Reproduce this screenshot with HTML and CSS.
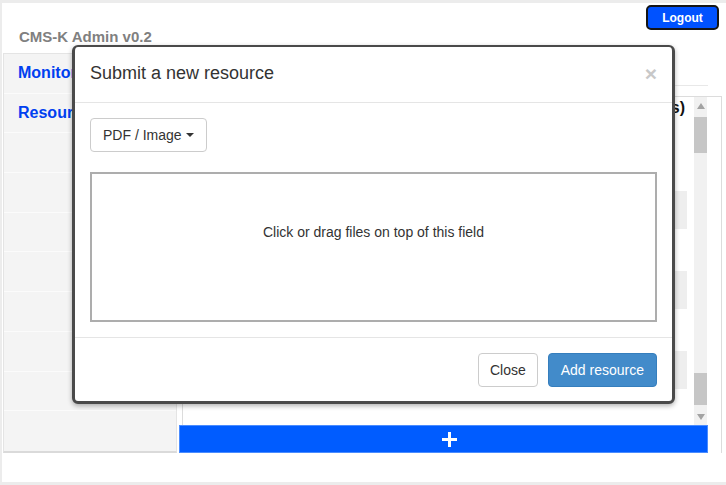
FILE: index.html
```html
<!DOCTYPE html>
<html lang="en">
<head>
<meta charset="utf-8">
<title>CMS-K Admin</title>
<link rel="stylesheet" href="styles.css">
</head>
<body>
<div class="page">
  <header class="top">
    <h1 class="brand">CMS-K Admin v0.2</h1>
    <button class="logout">Logout</button>
  </header>
  <div class="layout">
    <nav class="sidebar">
      <a class="nav-item">Monitor</a>
      <a class="nav-item">Resources</a>
      <span class="nav-item"></span>
      <span class="nav-item"></span>
      <span class="nav-item"></span>
      <span class="nav-item"></span>
      <span class="nav-item"></span>
      <span class="nav-item"></span>
      <span class="nav-item"></span>
      <span class="nav-item nav-last"></span>
    </nav>
    <main class="main">
      <hr class="rule">
      <section class="panel">
        <div class="panel-scroll">
          <div class="list">
            <div class="list-head">Resources (7 items)</div>
            <div class="row"></div>
            <div class="row row-alt"></div>
            <div class="row"></div>
            <div class="row row-alt"></div>
            <div class="row"></div>
            <div class="row row-alt"></div>
            <div class="row"></div>
          </div>
          <div class="scrollbar">
            <div class="sb-arrow"><span class="tri-up"></span></div>
            <div class="sb-thumb sb-thumb-top"></div>
            <div class="sb-space"></div>
            <div class="sb-thumb sb-thumb-bottom"></div>
            <div class="sb-arrow"><span class="tri-down"></span></div>
          </div>
        </div>
        <button class="add-bar" aria-label="Add">
          <svg width="15" height="15" viewBox="0 0 15 15"><rect x="6" y="0" width="3" height="15" fill="#fff"/><rect x="0" y="6" width="15" height="3" fill="#fff"/></svg>
        </button>
      </section>
    </main>
  </div>

  <div class="modal">
    <div class="modal-header">
      <h4 class="modal-title">Submit a new resource</h4>
      <button class="modal-close">&times;</button>
    </div>
    <div class="modal-body">
      <button class="dropdown">PDF / Image <span class="caret"></span></button>
      <div class="dropzone">Click or drag files on top of this field</div>
    </div>
    <div class="modal-footer">
      <button class="btn btn-default">Close</button>
      <button class="btn btn-primary">Add resource</button>
    </div>
  </div>
</div>
</body>
</html>
```
FILE: styles.css
```css
* { box-sizing: border-box; }

html, body {
  margin: 0;
  padding: 0;
}

body {
  background: #ececec;
  font-family: "Liberation Sans", Arial, sans-serif;
  color: #333;
  width: 726px;
  height: 485px;
  overflow: hidden;
}

.page {
  position: relative;
  margin: 3px 0 0 2px;
  width: 724px;
  height: 479px;
  background: #fff;
  overflow: hidden;
}

.top {
  height: 50px;
  display: flex;
  justify-content: space-between;
  align-items: flex-start;
}

.brand {
  margin: 25px 0 0 17px;
  font-size: 15px;
  line-height: 18px;
  font-weight: bold;
  color: #808080;
}

.logout {
  margin: 2px 7px 0 0;
  width: 73px;
  height: 25px;
  border: 2px solid #151515;
  border-radius: 5px;
  background: #0052ff;
  color: #fff;
  font-family: "Liberation Sans", Arial, sans-serif;
  font-size: 12px;
  font-weight: bold;
  padding: 0;
}

.layout {
  display: flex;
  padding-left: 1px;
}

.sidebar {
  width: 174px;
  display: flex;
  flex-direction: column;
  background: #f4f4f4;
  border: 1px solid #e4e4e4;
  border-bottom: 2px solid #dadada;
}

.nav-item {
  height: 39.7px;
  display: flex;
  align-items: center;
  padding-left: 14px;
  border-bottom: 1px solid #fbfbfb;
  color: #0040f0;
  font-weight: bold;
  font-size: 16px;
  text-decoration: none;
}

.nav-last { border-bottom: none; }

.main {
  flex: 1;
  margin-left: 2px;
  display: flex;
  flex-direction: column;
}

.rule {
  margin: 32px 18px 10px 3px;
  border: 0;
  border-top: 1px solid #e8e8e8;
  height: 0;
}

.panel {
  margin-left: 3px;
  width: 540px;
  border: 1px solid #dcdcdc;
  border-bottom: none;
  display: flex;
  flex-direction: column;
}

.panel-scroll {
  height: 328px;
  display: flex;
  overflow: hidden;
}

.list {
  width: 511px;
  display: flex;
  flex-direction: column;
}

.list-head {
  flex: 0 0 54px;
  line-height: 22px;
  text-align: right;
  padding-right: 9px;
  font-size: 16px;
  font-weight: bold;
  color: #111;
}

.row {
  flex: 0 0 40px;
  margin: 0 7px;
}

.row-alt {
  background: #eeeeee;
  flex-basis: 38px;
  margin-bottom: 2px;
}

.scrollbar {
  width: 13px;
  background: #f1f1f1;
  display: flex;
  flex-direction: column;
}

.sb-arrow {
  flex: 0 0 17px;
  display: flex;
  align-items: center;
  justify-content: center;
}

.tri-up, .tri-down {
  width: 0;
  height: 0;
  border-left: 4px solid transparent;
  border-right: 4px solid transparent;
}

.tri-up { border-bottom: 6px solid #a3a3a3; }
.tri-down { border-top: 6px solid #a3a3a3; }

.sb-thumb {
  background: #c6c6c6;
}

.sb-thumb-top {
  margin-top: 3px;
  flex: 0 0 36px;
}

.sb-space { flex: 1; }

.sb-thumb-bottom {
  flex: 0 0 32px;
  margin-bottom: 3px;
}

.add-bar {
  margin-left: -4px;
  width: 529px;
  height: 28px;
  background: #005cff;
  border: 1px solid #4a8cff;
  padding: 0 0 0 11px;
  display: flex;
  align-items: center;
  justify-content: center;
}

.add-bar svg { display: block; }

/* Modal overlay */
.modal {
  position: absolute;
  left: 70px;
  top: 42px;
  width: 603px;
  height: 359px;
  background: #fff;
  border: 3px solid #4a4a4a;
  border-top-width: 2px;
  border-radius: 6px;
  box-shadow: 0 2px 5px rgba(0, 0, 0, 0.3);
  display: flex;
  flex-direction: column;
}

.modal-header {
  display: flex;
  justify-content: space-between;
  align-items: flex-start;
  padding: 14px 15px 16px;
  border-bottom: 1px solid #e5e5e5;
}

.modal-title {
  margin: 0;
  font-size: 18px;
  line-height: 25px;
  font-weight: normal;
  color: #333;
}

.modal-close {
  margin-top: 2px;
  padding: 0;
  border: 0;
  background: none;
  font-family: "Liberation Sans", Arial, sans-serif;
  font-size: 21px;
  line-height: 1;
  font-weight: bold;
  color: #c8c8c8;
}

.modal-body {
  padding: 15px;
  display: flex;
  flex-direction: column;
  align-items: flex-start;
}

.dropdown {
  height: 34px;
  padding: 0 12px;
  border: 1px solid #ccc;
  border-radius: 4px;
  background: #fff;
  color: #333;
  font-family: "Liberation Sans", Arial, sans-serif;
  font-size: 14px;
  display: inline-flex;
  align-items: center;
  gap: 4px;
}

.caret {
  width: 0;
  height: 0;
  border-top: 4px solid #333;
  border-left: 4px solid transparent;
  border-right: 4px solid transparent;
}

.dropzone {
  margin-top: 20px;
  width: 100%;
  height: 150px;
  border: 2px solid #adadad;
  padding-top: 48px;
  text-align: center;
  font-size: 14px;
  line-height: 20px;
  color: #333;
}

.modal-footer {
  border-top: 1px solid #e5e5e5;
  padding: 15px 15px 14px;
  display: flex;
  justify-content: flex-end;
  gap: 10px;
}

.btn {
  height: 34px;
  padding: 0 12px;
  border-radius: 4px;
  font-family: "Liberation Sans", Arial, sans-serif;
  font-size: 14px;
  border: 1px solid #ccc;
}

.btn-default {
  background: #fff;
  color: #333;
  padding: 0 11px;
}

.btn-primary {
  background: #428bca;
  border-color: #357ebd;
  color: #fff;
}
```
